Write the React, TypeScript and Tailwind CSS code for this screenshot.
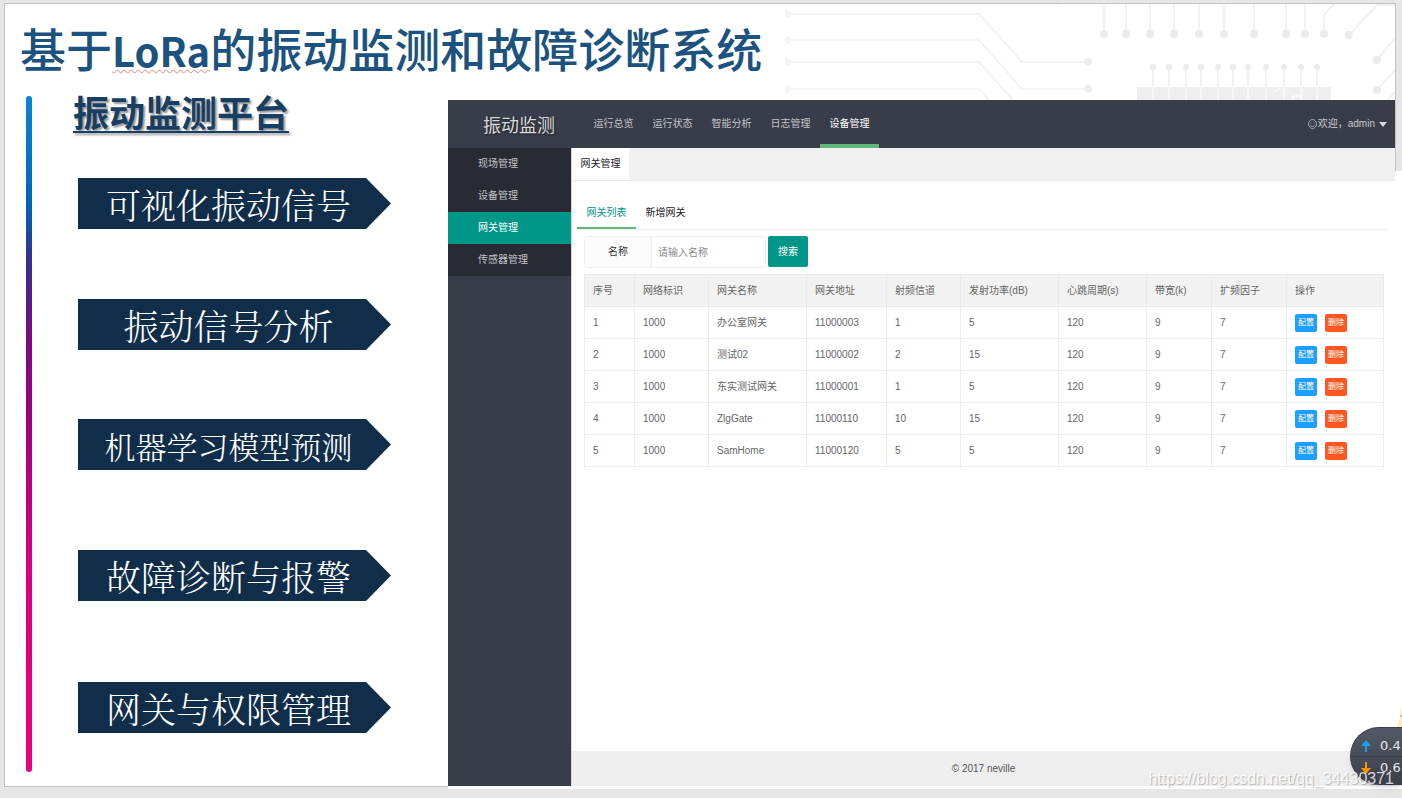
import React, { useState } from 'react'

const features = [
    { text: '可视化振动信号', cls: 'mt-12 text-[35px]' },
    { text: '振动信号分析', cls: 'mt-[70px] text-[35px]' },
    { text: '机器学习模型预测', cls: 'mt-[69px] text-[31px]' },
    { text: '故障诊断与报警', cls: 'mt-20 text-[35px]' },
    { text: '网关与权限管理', cls: 'mt-[81px] text-[35px]' },
]

const navItems = ['运行总览', '运行状态', '智能分析', '日志管理', '设备管理']
const sideItems = ['现场管理', '设备管理', '网关管理', '传感器管理']

const columns = [
    { title: '序号', width: 'w-[50px]' },
    { title: '网络标识', width: 'w-[74px]' },
    { title: '网关名称', width: 'w-[98px]' },
    { title: '网关地址', width: 'w-[80px]' },
    { title: '射频信道', width: 'w-[74px]' },
    { title: '发射功率(dB)', width: 'w-[98px]' },
    { title: '心跳周期(s)', width: 'w-[88px]' },
    { title: '带宽(k)', width: 'w-[65px]' },
    { title: '扩频因子', width: 'w-[75px]' },
    { title: '操作', width: 'w-[97px]' },
]

const rows = [
    ['1', '1000', '办公室网关', '11000003', '1', '5', '120', '9', '7'],
    ['2', '1000', '测试02', '11000002', '2', '15', '120', '9', '7'],
    ['3', '1000', '东实测试网关', '11000001', '1', '5', '120', '9', '7'],
    ['4', '1000', 'ZlgGate', '11000110', '10', '15', '120', '9', '7'],
    ['5', '1000', 'SamHome', '11000120', '5', '5', '120', '9', '7'],
]

const topPins = [319, 341, 365, 389, 414, 439, 469, 501, 520]
const chipPins = [368, 384, 401, 416, 433, 448, 463, 481, 499, 516, 532]

function Circuit() {
    return (
        <svg className="absolute top-0 right-0" width="610" height="96" viewBox="0 0 610 96" fill="none" aria-hidden="true">
            <g stroke="#f4f4f4" strokeWidth="2">
                <path d="M2 10H194L237 58H303" />
                <path d="M2 36H194L237 85H303" />
                <path d="M2 58H194L228 96" />
                <path d="M2 85H194L204 96" />
            </g>
            <g fill="#f5f5f5">
                {[10, 36, 58, 85].map((y) => <circle key={y} cx="2" cy={y} r="4" />)}
                <circle cx="303" cy="58" r="4" fill="#ededed" />
                <circle cx="303" cy="85" r="4" fill="#ededed" />
                <circle cx="273" cy="0" r="2" />
            </g>
            <g stroke="#f2f2f2" strokeWidth="2">
                {topPins.map((x) => <path key={x} d={`M${x} 0V28`} />)}
                <path d="M539 30V11L549 0" />
                <path d="M564 31L592 1H610" />
                <path d="M592 56L610 34" />
                <path d="M592 86L610 66" />
                <path d="M603 96L610 88" />
                {chipPins.map((x) => <path key={x} d={`M${x} 64V84`} />)}
            </g>
            <g fill="#ebebeb">
                {topPins.map((x) => <circle key={x} cx={x} cy="30" r="4" />)}
                <circle cx="539" cy="30" r="4" />
                <circle cx="564" cy="31" r="4" />
                <circle cx="592" cy="56" r="4" />
                <circle cx="592" cy="86" r="4" />
                {chipPins.map((x) => <circle key={x} cx={x} cy="63" r="3" />)}
            </g>
            <rect x="352" y="83" width="194" height="13" fill="#efefef" />
            <g stroke="#fff" strokeWidth="1">
                {chipPins.map((x) => <path key={x} d={`M${x} 83V96`} />)}
                <path d="M488 88L496 84M508 96V92H516" />
            </g>
        </svg>
    )
}

function Console() {
    const [nav, setNav] = useState('设备管理')
    const [side, setSide] = useState('网关管理')
    const [tab, setTab] = useState('网关列表')

    return (
        <div className="relative mt-2 -mb-[3px] flex min-w-0 flex-1 flex-col border-b-3 border-white bg-white text-[10px] leading-4 text-[#666] font-['Liberation_Sans','Noto_Sans_CJK_SC',sans-serif]">
            <div className="absolute top-[71px] -right-[7px] -bottom-[3px] w-[7px] bg-white"></div>

            <header className="flex h-12 items-stretch bg-[#393d49]">
                <div className="flex w-[136px] items-center pt-1 pl-[35px] text-lg text-[#d8d9dc] [text-shadow:1px_1px_2px_rgba(0,0,0,0.5)]">振动监测</div>
                <nav className="flex">
                    {navItems.map((item) => (
                        <a key={item} href="#" onClick={() => setNav(item)}
                            className={`flex w-[59px] items-center justify-center border-b-4 pt-1 ` + (nav === item ? "border-[#5fb878] text-white" : "border-transparent text-[#c3c4c8]")}>
                            {item}
                        </a>
                    ))}
                </nav>
                <button type="button" className="mr-2 ml-auto flex items-center text-[#c9cacd]">
                    <svg className="mr-px h-[10px] w-[9px]" viewBox="0 0 18 20" fill="none" stroke="currentColor" strokeWidth="1.5">
                        <ellipse cx="9" cy="10" rx="8" ry="9" />
                        <path d="M6 7v2M12 7v2M5 12c1.500 4 6.500 4 8 0" />
                    </svg>
                    <span>欢迎，admin</span>
                    <span className="ml-1 border-x-4 border-t-[5px] border-x-transparent border-t-[#d5d6d8]"></span>
                </button>
            </header>

            <div className="flex flex-1">
                <aside className="w-[123px] bg-[#393d49]">
                    <ul className="bg-[#282b33]">
                        {sideItems.map((item) => (
                            <li key={item}>
                                <a href="#" onClick={() => setSide(item)}
                                    className={`flex h-8 items-center pl-[30px] ` + (side === item ? "bg-[#009688] text-white" : "text-[#c3c4c8]")}>
                                    {item}
                                </a>
                            </li>
                        ))}
                    </ul>
                </aside>

                <main className="flex min-w-0 flex-1 flex-col border-l border-[#d5d6d8]">
                    <div className="flex h-[33px] border-b border-[#e9e9e9] bg-[#f1f1f1]">
                        <button type="button" className="w-[57px] bg-white text-[#222]">网关管理</button>
                    </div>

                    <div className="flex-1 pt-4 pr-3 pl-[5px]">
                        <div className="-mr-1 flex border-b border-[#eee]">
                            {['网关列表', '新增网关'].map((item) => (
                                <button key={item} type="button" onClick={() => setTab(item)}
                                    className={`h-8 w-[59px] border-b-2 pt-0.5 ` + (tab === item ? "border-[#5fb878] text-[#009688]" : "border-transparent text-[#222]")}>
                                    {item}
                                </button>
                            ))}
                        </div>

                        <form className="mt-[6px] ml-[7px] flex" onSubmit={(e) => e.preventDefault()}>
                            <label htmlFor="name" className="flex h-8 w-[68px] items-center justify-center rounded-l-sm border border-[#eee] bg-[#fbfbfb] text-[#333]">名称</label>
                            <input id="name" type="text" placeholder="请输入名称"
                                className="h-8 w-[114px] rounded-r-sm border border-l-0 border-[#eee] px-[6px] outline-none placeholder:text-[#888]" />
                            <button type="submit" className="ml-[2px] h-[31px] w-10 rounded-xs bg-[#009688] text-white">搜索</button>
                        </form>

                        <div className="mt-[6px] ml-[7px]">
                            <table className="w-full table-fixed border-collapse text-left">
                                <thead>
                                    <tr className="h-8 bg-[#f2f2f2]">
                                        {columns.map((c) => (
                                            <th key={c.title} className={`border border-[#eaeaea] pl-2 font-normal whitespace-nowrap ` + c.width}>{c.title}</th>
                                        ))}
                                    </tr>
                                </thead>
                                <tbody>
                                    {rows.map((row) => (
                                        <tr key={row[0]} className="h-8">
                                            {row.map((cell, i) => (
                                                <td key={i} className="border border-[#eee] pl-2 whitespace-nowrap">{cell}</td>
                                            ))}
                                            <td className="border border-[#eee] pl-2">
                                                <div className="flex gap-2 text-[8px] text-white">
                                                    <button type="button" className="h-[18px] w-[22px] rounded-xs bg-[#1e9fff]">配置</button>
                                                    <button type="button" className="h-[18px] w-[22px] rounded-xs bg-[#ff5722]">删除</button>
                                                </div>
                                            </td>
                                        </tr>
                                    ))}
                                </tbody>
                            </table>
                        </div>
                    </div>

                    <footer className="relative -mr-[7px] h-[35px] bg-[#eee] pr-[7px] text-center leading-[35px] text-[#555]">© 2017 neville</footer>
                </main>
            </div>
        </div>
    )
}

function SpeedWidget() {
    return (
        <div className="absolute right-0 bottom-[13px] w-[52px]">
            <svg className="absolute -top-5 right-0" width="5" height="20" viewBox="0 0 5 20" aria-hidden="true">
                <path d="M5 0L3 6L4 8L0 20H5Z" fill="#fdeeb5" />
                <path d="M3 8H5V10H3Z" fill="#d9b8a8" />
            </svg>
            <div className="h-[58px] overflow-hidden rounded-l-full border border-r-0 border-[#3a3e48] bg-linear-to-b from-[#535965] to-[#3c404b] text-[13px] text-[#e4e5e8] shadow-md font-['DejaVu_Sans',sans-serif]">
                <div className="flex h-[29px] items-center gap-[9px] border-b border-[#393d46] pt-2 pl-[10px]">
                    <svg className="shrink-0" width="10" height="12" viewBox="0 0 10 12"><path d="M5 0L10 6H6V12H4V6H0Z" fill="#1ba1e8" /></svg>
                    <span>0.4</span>
                </div>
                <div className="flex h-[28px] items-center gap-[9px] pb-1.5 pl-[10px]">
                    <svg className="shrink-0" width="10" height="12" viewBox="0 0 10 12"><path d="M5 12L10 6H6V0H4V6H0Z" fill="#ff9500" /></svg>
                    <span>0.6</span>
                </div>
            </div>
        </div>
    )
}

export default function App() {
    return (
        <div className="relative flex min-h-screen flex-col overflow-hidden bg-[#e6e6e6] pt-[3px] pr-[6px] pb-[11px] pl-1 font-['Noto_Sans_CJK_SC',sans-serif]">
            <div className="relative flex flex-1 flex-col border border-[#c3c3c3] bg-white">
                <Circuit />

                <h1 className="relative flex h-[88px] items-center pb-0.5 pl-[15px] text-[46px] leading-none font-medium whitespace-nowrap text-[#1b5280]">
                    <span>
                        基于<span className="text-[40px] font-bold underline decoration-[#f28080] decoration-wavy decoration-1 underline-offset-2">LoRa</span>的振动监测和故障诊断系统
                    </span>
                </h1>

                <div className="flex flex-1">
                    <section className="flex w-[443px] shrink-0 pl-[21px]">
                        <div className="mt-1 mb-[14px] w-[6px] rounded-full bg-[linear-gradient(#0a86d4,#0065b8_16%,#35308f_24%,#7c0a82_36%,#a8007e_52%,#d8007e_70%,#ea0080)]"></div>
                        <div className="ml-[41px]">
                            <h2 className="text-4xl leading-[38px] font-bold text-[#163f63] underline decoration-2 underline-offset-4 [text-shadow:2px_2px_2px_rgba(0,0,0,0.4)]">振动监测平台</h2>
                            <ul className="ml-[5px]">
                                {features.map((f) => (
                                    <li key={f.text}
                                        className={`flex h-[51px] w-[313px] items-center justify-center bg-[#102e4a] pt-0.5 pr-3 leading-none font-light whitespace-nowrap text-white [clip-path:polygon(0_0,calc(100%-25px)_0,100%_50%,calc(100%-25px)_100%,0_100%)] font-['Noto_Serif_CJK_SC','Noto_Sans_CJK_SC',serif] ` + f.cls}>
                                        {f.text}
                                    </li>
                                ))}
                            </ul>
                        </div>
                    </section>

                    <Console />
                </div>
            </div>

            <SpeedWidget />
            <div className="absolute right-2 bottom-[9px] text-base leading-5 text-white/80 [text-shadow:1px_1px_1px_rgba(0,0,0,0.25)] font-['Liberation_Sans',sans-serif]">https://blog.csdn.net/qq_34430371</div>
        </div>
    )
}
